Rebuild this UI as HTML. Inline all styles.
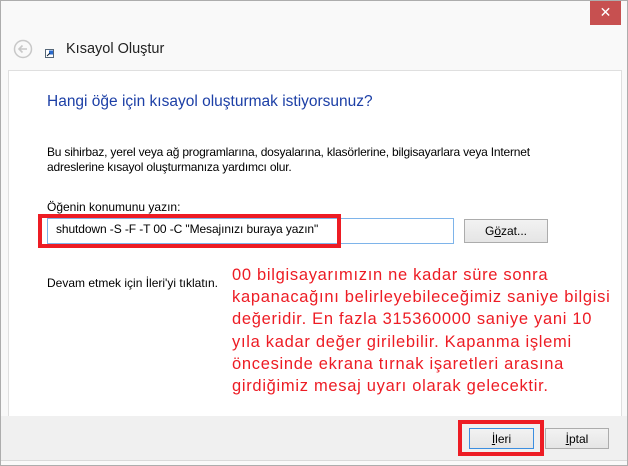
<!DOCTYPE html>
<html><head><meta charset="utf-8"><style>
body{margin:0;width:628px;height:466px;overflow:hidden;background:#fff;font-family:"Liberation Sans",sans-serif;}
.win{position:absolute;left:0;top:0;width:626px;height:464px;border:1px solid #adadad;background:#f9f9f9;}
.close{position:absolute;left:589px;top:0;width:31px;height:24px;background:#c75050;color:#fff;font-size:14px;text-align:center;line-height:23px;}
.panel{position:absolute;left:7px;top:69px;width:612px;height:345px;background:#fff;border:1px solid #dfdfdf;}
.bar{position:absolute;left:0;top:415px;width:626px;height:44px;background:#f0f0f0;border-bottom:1px solid #dadada;}
.t{position:absolute;white-space:nowrap;}
.btn{position:absolute;background:linear-gradient(#f2f2f2,#e5e5e5);border:1px solid #acacac;font-size:12px;text-align:center;box-sizing:border-box;line-height:20px;color:#000;}
.red{position:absolute;border:4px solid #ed1c24;box-sizing:border-box;}
</style></head><body>
<div class="win">
<div class="close">✕</div>
<svg style="position:absolute;left:12px;top:38px" width="20" height="20"><circle cx="10" cy="10" r="8.5" fill="none" stroke="#c8c8c8" stroke-width="1.5"/><path d="M14 10H6M9.5 6.5L6 10l3.5 3.5" fill="none" stroke="#c8c8c8" stroke-width="1.6"/></svg>
<svg style="position:absolute;left:44px;top:48px" width="9" height="9"><rect x="0.5" y="0.5" width="8" height="8" fill="#fff" stroke="#567"/><rect x="4" y="1.5" width="4" height="4" fill="#2a6bd0"/><path d="M2 7L5 4" stroke="#123" stroke-width="1"/></svg>
<div class="t" style="left:65px;top:40px;font-size:14.5px;color:#222">Kısayol Oluştur</div>
<div class="panel"></div>
<div class="t" style="left:46px;top:92px;font-size:15.5px;color:#1c3fa6">Hangi öğe için kısayol oluşturmak istiyorsunuz?</div>
<div class="t" style="left:46px;top:144px;font-size:12px;line-height:15px;color:#000;letter-spacing:-0.2px">Bu sihirbaz, yerel veya ağ programlarına, dosyalarına, klasörlerine, bilgisayarlara veya Internet<br>adreslerine kısayol oluşturmanıza yardımcı olur.</div>
<div class="t" style="left:46px;top:199px;font-size:12px;color:#000">Öğenin konumunu yazın:</div>
<div style="position:absolute;left:46px;top:217px;width:407px;height:26px;border:1px solid #7eb4ea;box-sizing:border-box;background:#fff"></div>
<div class="t" style="left:55px;top:221px;font-size:12px;color:#000;letter-spacing:-0.1px">shutdown -S -F -T 00 -C "Mesajınızı buraya yazın"</div>
<div class="red" style="left:37px;top:213px;width:303px;height:34px"></div>
<div class="btn" style="left:463px;top:218px;width:84px;height:24px;line-height:22px">G<u>ö</u>zat...</div>
<div class="t" style="left:46px;top:275px;font-size:12px;color:#000">Devam etmek için İleri'yi tıklatın.</div>
<div class="t" style="left:231px;top:263px;font-size:16.5px;line-height:22.2px;color:#ed1c24;letter-spacing:0.7px">00 bilgisayarımızın ne kadar süre sonra<br>kapanacağını belirleyebileceğimiz saniye bilgisi<br>değeridir. En fazla 315360000 saniye yani 10<br>yıla kadar değer girilebilir. Kapanma işlemi<br>öncesinde ekrana tırnak işaretleri arasına<br>girdiğimiz mesaj uyarı olarak gelecektir.</div>
<div class="bar"></div>
<div class="btn" style="left:468px;top:427px;width:65px;height:21px;border-color:#3c8ee0"><u>İ</u>leri</div>
<div class="red" style="left:457px;top:419px;width:86px;height:36px"></div>
<div class="btn" style="left:544px;top:427px;width:64px;height:21px"><u>İ</u>ptal</div>
</div>
</body></html>
